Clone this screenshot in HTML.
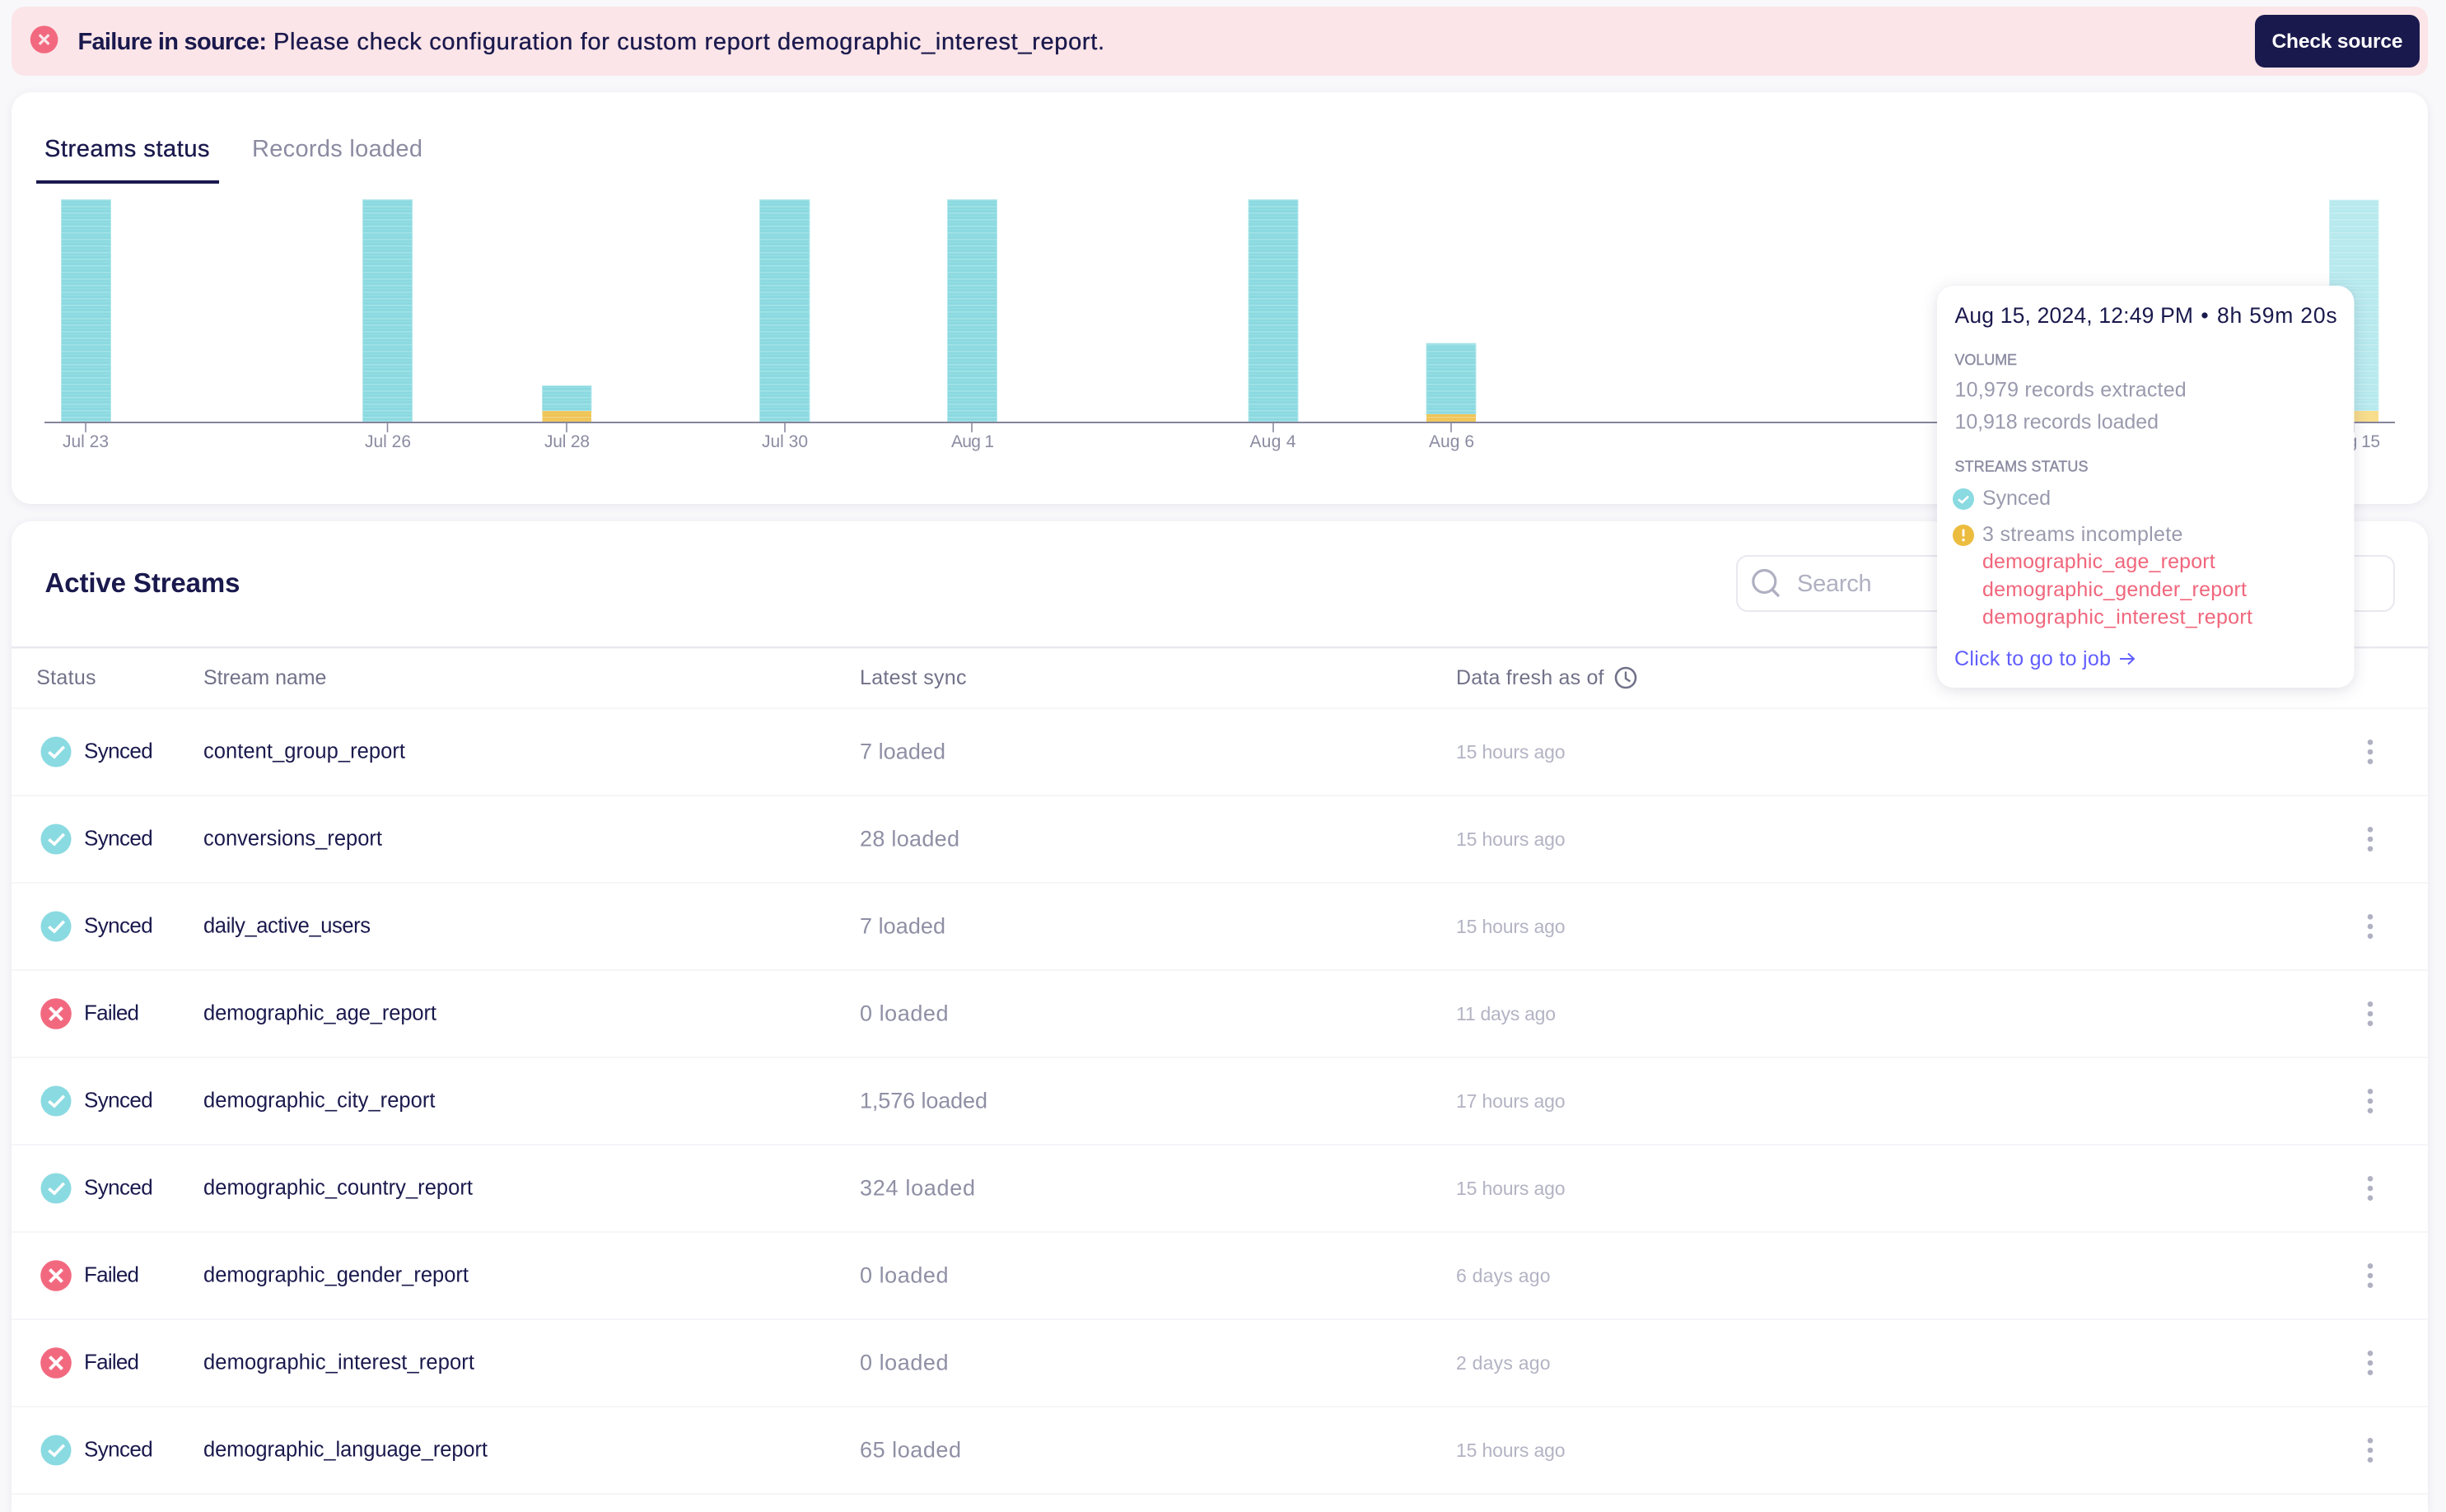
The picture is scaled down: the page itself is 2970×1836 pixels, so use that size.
<!DOCTYPE html>
<html lang="en"><head><meta charset="utf-8"><title>Streams</title>
<style>
html,body{margin:0;padding:0;background:#f8f8fb;width:2970px;height:1836px;overflow:hidden}
svg{display:block}
text{font-family:"Liberation Sans",sans-serif;fill:#1a194d}
.card{fill:#fff;filter:drop-shadow(0 2px 5px rgba(26,25,77,.07))}
.tip{fill:#fff;filter:drop-shadow(0 3px 9px rgba(26,25,77,.14))}
.tick{font-size:21px;fill:#8b8ba2}
.th{font-size:25px;fill:#717189}
.st{font-size:26px}
.nm{font-size:25.5px}
.ld{font-size:27px;fill:#8f8fa5}
.ag{font-size:23px;fill:#b3b3c4}
.tg{font-size:25px;fill:#9a9aae}
.cap{font-size:18px;fill:#8b8ba2;stroke:#8b8ba2;stroke-width:.4}
.rd{font-size:25px;fill:#f0667c}
.ln{fill:#f6f6f9}
.dot{fill:#b0b0c3}
.b{stroke:#b4e8ec;stroke-width:1}
.bl{stroke:#cdf1f4;stroke-width:1}
</style></head><body>
<svg width="2970" height="1836" viewBox="0 0 2970 1836" xmlns="http://www.w3.org/2000/svg">
<defs>
<pattern id="t" patternUnits="userSpaceOnUse" width="60" height="8"><rect width="60" height="8" fill="#8bd9e0"/><rect y="2" width="60" height="1.6" fill="#a2e3e8"/><rect y="6" width="60" height="1" fill="#96dee4"/></pattern>
<pattern id="y" patternUnits="userSpaceOnUse" width="60" height="8"><rect width="60" height="8" fill="#efc455"/><rect y="2" width="60" height="1.6" fill="#f4d27c"/><rect y="6" width="60" height="1" fill="#f1ca66"/></pattern>
<pattern id="tl" patternUnits="userSpaceOnUse" width="60" height="8"><rect width="60" height="8" fill="#b6e9ed"/><rect y="2" width="60" height="1.6" fill="#c6eef2"/><rect y="6" width="60" height="1" fill="#beecef"/></pattern>
<g id="ok"><circle r="18.5" fill="#8adae1"/><path d="M-8.7 .3L-2 6 9.7-6.3" fill="none" stroke="#fff" stroke-width="3.6"/></g>
<g id="no"><circle r="18.8" fill="#f2697f"/><path d="M-7.5-7.5L7.5 7.5M7.5-7.5L-7.5 7.5" fill="none" stroke="#fff" stroke-width="4"/></g>
<g id="dots"><circle cy="-11.7" r="3.3" class="dot"/><circle r="3.3" class="dot"/><circle cy="11.7" r="3.3" class="dot"/></g>
</defs>

<!-- banner -->
<rect x="14" y="8" width="2934" height="84" rx="16" fill="#fbe5e8"/>
<circle cx="53.6" cy="48" r="16.8" fill="#f2697f"/>
<path d="M47.8 42.2L59.4 53.8M59.4 42.2L47.8 53.8" stroke="#fbe5e8" stroke-width="3.2" fill="none"/>
<text x="94.5" y="60" font-size="29" font-weight="700" textLength="229.5" lengthAdjust="spacing">Failure in source:</text>
<text x="332" y="60" font-size="29" stroke="#1a194d" stroke-width=".35" textLength="1009" lengthAdjust="spacing">Please check configuration for custom report demographic_interest_report.</text>
<rect x="2738" y="18" width="200" height="64" rx="12" fill="#1a194d"/>
<text x="2758.5" y="58" font-size="24.5" font-weight="700" style="fill:#fff" textLength="159" lengthAdjust="spacing">Check source</text>

<!-- chart card -->
<rect class="card" x="14" y="112" width="2934" height="500" rx="24"/>
<text x="54" y="190" font-size="29" stroke="#1a194d" stroke-width=".35" textLength="200.5" lengthAdjust="spacing">Streams status</text>
<text x="306" y="190" font-size="29" style="fill:#8b8ba2" textLength="207" lengthAdjust="spacing">Records loaded</text>
<rect x="44" y="219" width="222" height="4" fill="#1a194d"/>

<rect class="b" x="74.5" y="242.5" width="60" height="269.5" fill="url(#t)"/>
<rect class="b" x="440.5" y="242.5" width="60" height="269.5" fill="url(#t)"/>
<rect class="b" x="658.5" y="468.5" width="59.5" height="30.5" fill="url(#t)"/><rect x="658.5" y="499" width="59.5" height="13" fill="url(#y)"/>
<rect class="b" x="922.5" y="242.5" width="60.5" height="269.5" fill="url(#t)"/>
<rect class="b" x="1150.5" y="242.5" width="60" height="269.5" fill="url(#t)"/>
<rect class="b" x="1516" y="242.5" width="60" height="269.5" fill="url(#t)"/>
<rect class="b" x="1732" y="417" width="60" height="86" fill="url(#t)"/><rect x="1732" y="503" width="60" height="9" fill="url(#y)"/>
<rect class="bl" x="2828.5" y="243" width="59.5" height="256" fill="url(#tl)"/><rect x="2828.5" y="499" width="59.5" height="13" fill="#f8dd8c"/>

<rect x="54" y="512" width="2854" height="2" fill="#85859c"/>
<g fill="#8b8ba2">
<rect x="103.2" y="514" width="1.6" height="11"/><rect x="469.7" y="514" width="1.6" height="11"/><rect x="687.2" y="514" width="1.6" height="11"/><rect x="952.2" y="514" width="1.6" height="11"/><rect x="1179.2" y="514" width="1.6" height="11"/><rect x="1545.2" y="514" width="1.6" height="11"/><rect x="1761.2" y="514" width="1.6" height="11"/><rect x="2857.2" y="514" width="1.6" height="11"/>
</g>
<text class="tick" x="76" y="543" textLength="56" lengthAdjust="spacing">Jul 23</text>
<text class="tick" x="443" y="543" textLength="56" lengthAdjust="spacing">Jul 26</text>
<text class="tick" x="661" y="543" textLength="55" lengthAdjust="spacing">Jul 28</text>
<text class="tick" x="925" y="543" textLength="56" lengthAdjust="spacing">Jul 30</text>
<text class="tick" x="1155" y="543" textLength="52" lengthAdjust="spacing">Aug 1</text>
<text class="tick" x="1517.5" y="543" textLength="56" lengthAdjust="spacing">Aug 4</text>
<text class="tick" x="1735" y="543" textLength="55" lengthAdjust="spacing">Aug 6</text>
<text class="tick" x="2826" y="543" textLength="64" lengthAdjust="spacing">Aug 15</text>

<!-- streams card -->
<path class="card" d="M14 1836V657a24 24 0 0 1 24-24H2924a24 24 0 0 1 24 24V1836Z"/>
<text x="54.5" y="719" font-size="33" font-weight="700" textLength="237" lengthAdjust="spacing">Active Streams</text>
<rect x="2109" y="675" width="798" height="67" rx="13" fill="#fff" stroke="#e8e8ef" stroke-width="2"/>
<circle cx="2142.3" cy="706" r="13.5" fill="none" stroke="#b0b0c3" stroke-width="3.2"/>
<path d="M2152 716L2160 724" stroke="#b0b0c3" stroke-width="3.4" fill="none"/>
<text x="2182" y="718" font-size="29" style="fill:#b0b0c3" textLength="90.7" lengthAdjust="spacing">Search</text>
<rect x="14" y="785" width="2934" height="2.4" fill="#e9e9f0"/>
<text class="th" x="44.2" y="831" textLength="72.3" lengthAdjust="spacing">Status</text>
<text class="th" x="247" y="831" textLength="149.4" lengthAdjust="spacing">Stream name</text>
<text class="th" x="1044" y="831" textLength="129.5" lengthAdjust="spacing">Latest sync</text>
<text class="th" x="1768" y="831" textLength="179.5" lengthAdjust="spacing">Data fresh as of</text>
<circle cx="1974" cy="823" r="12" fill="none" stroke="#717189" stroke-width="2.6"/>
<path d="M1974 815.5V824L1979.5 827.5" fill="none" stroke="#717189" stroke-width="2.4"/>

<rect class="ln" x="14" y="859" width="2934" height="2"/>
<rect class="ln" x="14" y="965" width="2934" height="2"/>
<rect class="ln" x="14" y="1071" width="2934" height="2"/>
<rect class="ln" x="14" y="1177" width="2934" height="2"/>
<rect class="ln" x="14" y="1283" width="2934" height="2"/>
<rect class="ln" x="14" y="1389" width="2934" height="2"/>
<rect class="ln" x="14" y="1495" width="2934" height="2"/>
<rect class="ln" x="14" y="1601" width="2934" height="2"/>
<rect class="ln" x="14" y="1707" width="2934" height="2"/>
<rect class="ln" x="14" y="1813" width="2934" height="2"/>

<!-- row 1 -->
<use href="#ok" x="68" y="913"/><text class="st" x="102" y="920.5" textLength="83.7" lengthAdjust="spacing">Synced</text>
<text class="nm" x="247" y="920.5" textLength="245" lengthAdjust="spacing">content_group_report</text>
<text class="ld" x="1044" y="921.5" textLength="104" lengthAdjust="spacing">7 loaded</text>
<text class="ag" x="1768" y="921" textLength="132.5" lengthAdjust="spacing">15 hours ago</text>
<use href="#dots" x="2878" y="913"/>
<!-- row 2 -->
<use href="#ok" x="68" y="1019"/><text class="st" x="102" y="1026.5" textLength="83.7" lengthAdjust="spacing">Synced</text>
<text class="nm" x="247" y="1026.5" textLength="217" lengthAdjust="spacing">conversions_report</text>
<text class="ld" x="1044" y="1027.5" textLength="121" lengthAdjust="spacing">28 loaded</text>
<text class="ag" x="1768" y="1027" textLength="132.5" lengthAdjust="spacing">15 hours ago</text>
<use href="#dots" x="2878" y="1019"/>
<!-- row 3 -->
<use href="#ok" x="68" y="1125"/><text class="st" x="102" y="1132.5" textLength="83.7" lengthAdjust="spacing">Synced</text>
<text class="nm" x="247" y="1132.5" textLength="203" lengthAdjust="spacing">daily_active_users</text>
<text class="ld" x="1044" y="1133.5" textLength="104" lengthAdjust="spacing">7 loaded</text>
<text class="ag" x="1768" y="1133" textLength="132.5" lengthAdjust="spacing">15 hours ago</text>
<use href="#dots" x="2878" y="1125"/>
<!-- row 4 -->
<use href="#no" x="68" y="1231"/><text class="st" x="102" y="1238.5" textLength="67" lengthAdjust="spacing">Failed</text>
<text class="nm" x="247" y="1238.5" textLength="283" lengthAdjust="spacing">demographic_age_report</text>
<text class="ld" x="1044" y="1239.5" textLength="107.5" lengthAdjust="spacing">0 loaded</text>
<text class="ag" x="1768" y="1239" textLength="121" lengthAdjust="spacing">11 days ago</text>
<use href="#dots" x="2878" y="1231"/>
<!-- row 5 -->
<use href="#ok" x="68" y="1337"/><text class="st" x="102" y="1344.5" textLength="83.7" lengthAdjust="spacing">Synced</text>
<text class="nm" x="247" y="1344.5" textLength="281.5" lengthAdjust="spacing">demographic_city_report</text>
<text class="ld" x="1044" y="1345.5" textLength="155" lengthAdjust="spacing">1,576 loaded</text>
<text class="ag" x="1768" y="1345" textLength="132.5" lengthAdjust="spacing">17 hours ago</text>
<use href="#dots" x="2878" y="1337"/>
<!-- row 6 -->
<use href="#ok" x="68" y="1443"/><text class="st" x="102" y="1450.5" textLength="83.7" lengthAdjust="spacing">Synced</text>
<text class="nm" x="247" y="1450.5" textLength="327" lengthAdjust="spacing">demographic_country_report</text>
<text class="ld" x="1044" y="1451.5" textLength="140" lengthAdjust="spacing">324 loaded</text>
<text class="ag" x="1768" y="1451" textLength="132.5" lengthAdjust="spacing">15 hours ago</text>
<use href="#dots" x="2878" y="1443"/>
<!-- row 7 -->
<use href="#no" x="68" y="1549"/><text class="st" x="102" y="1556.5" textLength="67" lengthAdjust="spacing">Failed</text>
<text class="nm" x="247" y="1556.5" textLength="322" lengthAdjust="spacing">demographic_gender_report</text>
<text class="ld" x="1044" y="1557.5" textLength="107.5" lengthAdjust="spacing">0 loaded</text>
<text class="ag" x="1768" y="1557" textLength="114.6" lengthAdjust="spacing">6 days ago</text>
<use href="#dots" x="2878" y="1549"/>
<!-- row 8 -->
<use href="#no" x="68" y="1655"/><text class="st" x="102" y="1662.5" textLength="67" lengthAdjust="spacing">Failed</text>
<text class="nm" x="247" y="1662.5" textLength="329" lengthAdjust="spacing">demographic_interest_report</text>
<text class="ld" x="1044" y="1663.5" textLength="107.5" lengthAdjust="spacing">0 loaded</text>
<text class="ag" x="1768" y="1663" textLength="114.6" lengthAdjust="spacing">2 days ago</text>
<use href="#dots" x="2878" y="1655"/>
<!-- row 9 -->
<use href="#ok" x="68" y="1761"/><text class="st" x="102" y="1768.5" textLength="83.7" lengthAdjust="spacing">Synced</text>
<text class="nm" x="247" y="1768.5" textLength="345" lengthAdjust="spacing">demographic_language_report</text>
<text class="ld" x="1044" y="1769.5" textLength="123" lengthAdjust="spacing">65 loaded</text>
<text class="ag" x="1768" y="1769" textLength="132.5" lengthAdjust="spacing">15 hours ago</text>
<use href="#dots" x="2878" y="1761"/>

<!-- tooltip -->
<rect class="tip" x="2352" y="347" width="506.5" height="488" rx="20"/>
<text x="2373.5" y="392" font-size="26.5" textLength="289.5" lengthAdjust="spacing">Aug 15, 2024, 12:49 PM</text>
<circle cx="2677" cy="383" r="3.6" fill="#1a194d"/>
<text x="2692" y="392" font-size="26.5" textLength="145.6" lengthAdjust="spacing">8h 59m 20s</text>
<text class="cap" x="2373.5" y="443" textLength="75.5" lengthAdjust="spacing">VOLUME</text>
<text class="tg" x="2373.5" y="481.5" textLength="281.2" lengthAdjust="spacing">10,979 records extracted</text>
<text class="tg" x="2373.5" y="520.5" textLength="247.5" lengthAdjust="spacing">10,918 records loaded</text>
<text class="cap" x="2373.5" y="572.7" textLength="162" lengthAdjust="spacing">STREAMS STATUS</text>
<circle cx="2384" cy="606" r="13" fill="#8adae1"/>
<path d="M2378 606.5L2382.4 610 2390 602.8" fill="none" stroke="#fff" stroke-width="2.6"/>
<text class="tg" x="2407" y="613" textLength="83" lengthAdjust="spacing">Synced</text>
<circle cx="2384" cy="650" r="13" fill="#ecbc3e"/>
<rect x="2382.6" y="642.5" width="2.8" height="9" rx="1" fill="#fff"/><circle cx="2384" cy="655.6" r="1.7" fill="#fff"/>
<text class="tg" x="2407" y="657" textLength="243.4" lengthAdjust="spacing">3 streams incomplete</text>
<text class="rd" x="2407" y="690" textLength="282.7" lengthAdjust="spacing">demographic_age_report</text>
<text class="rd" x="2407" y="724" textLength="321" lengthAdjust="spacing">demographic_gender_report</text>
<text class="rd" x="2407" y="757.5" textLength="328" lengthAdjust="spacing">demographic_interest_report</text>
<text x="2373" y="808" font-size="25" style="fill:#615eff" textLength="190" lengthAdjust="spacing">Click to go to job</text>
<path d="M2574 800H2591M2584 793.5L2591 800 2584 806.5" fill="none" stroke="#615eff" stroke-width="2"/>
</svg>
</body></html>
